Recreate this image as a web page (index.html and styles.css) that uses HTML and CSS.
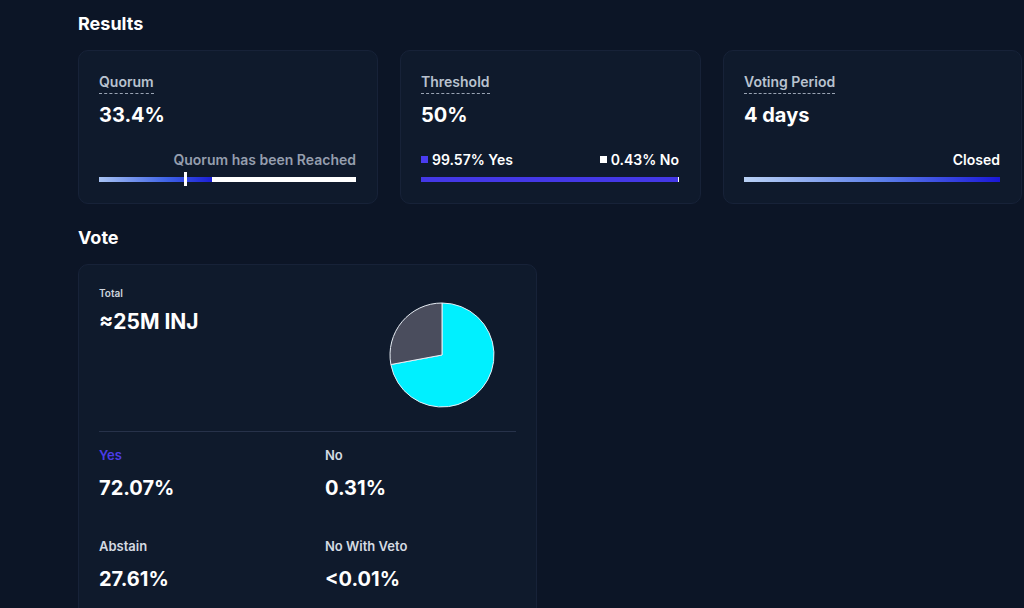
FILE: index.html
```html
<!DOCTYPE html>
<html lang="en">
<head>
	<meta charset="UTF-8">
	<title>Proposal</title>
	<link rel="stylesheet" href="styles.css">
</head>
<body>
	<div class="page">
		<h2 class="title">Results</h2>
		<div class="results">
			<div class="card stat">
				<span class="label">Quorum</span>
				<div class="value">33.4%</div>
				<div class="foot">
					<div class="caption right muted">Quorum has been Reached</div>
					<div class="bar quorum">
						<span class="fill" style="width: 44%"></span>
						<span class="mark" style="left: 33.4%"></span>
					</div>
				</div>
			</div>
			<div class="card stat">
				<span class="label">Threshold</span>
				<div class="value">50%</div>
				<div class="foot">
					<div class="caption split">
						<span><i class="dot yes"></i>99.57% Yes</span>
						<span><i class="dot no"></i>0.43% No</span>
					</div>
					<div class="bar threshold">
						<span class="fill" style="width: 99.57%"></span>
					</div>
				</div>
			</div>
			<div class="card stat">
				<span class="label">Voting Period</span>
				<div class="value">4 days</div>
				<div class="foot">
					<div class="caption right">Closed</div>
					<div class="bar period"></div>
				</div>
			</div>
		</div>

		<h2 class="title vote-title">Vote</h2>
		<div class="card vote">
			<div class="vote-top">
				<div>
					<div class="small">Total</div>
					<div class="value total">≈25M INJ</div>
				</div>
				<svg class="pie" width="108" height="108" viewBox="-1 -1 108 108">
					<!-- yes 72.07%, abstain 27.61%, rest too thin to show -->
					<path d="M53 53 L53 1 A52 52 0 1 1 1.88 62.52 Z" fill="#00f0ff" stroke="#e8eef5" stroke-width="1"/>
					<path d="M53 53 L1.88 62.52 A52 52 0 0 1 53 1 Z" fill="#4a4d5d" stroke="#e8eef5" stroke-width="1"/>
				</svg>
			</div>
			<div class="options">
				<div class="option">
					<div class="opt-label yes-text">Yes</div>
					<div class="value">72.07%</div>
				</div>
				<div class="option">
					<div class="opt-label">No</div>
					<div class="value">0.31%</div>
				</div>
				<div class="option">
					<div class="opt-label">Abstain</div>
					<div class="value">27.61%</div>
				</div>
				<div class="option">
					<div class="opt-label">No With Veto</div>
					<div class="value">&lt;0.01%</div>
				</div>
			</div>
		</div>
	</div>
</body>
</html>
```

FILE: styles.css
```css
*{
	margin: 0;
	padding: 0;
	box-sizing: border-box;
}
body{
	background-color: #0c1526;
	color: #fff;
	font-family: Inter, "Liberation Sans", sans-serif;
	overflow: hidden;
}
.page{
	padding: 12px 0 0 78px;
}
.title{
	font-size: 18px;
	line-height: 24px;
	font-weight: 700;
	margin-bottom: 14px;
}
.vote-title{
	margin-top: 22px;
	margin-bottom: 14px;
}
.results{
	display: grid;
	grid-template-columns: 300px 301px 299px;
	gap: 22px;
}
.card{
	background-color: #0f1a2c;
	border: 1px solid #172238;
	border-radius: 10px;
}
.stat{
	height: 154px;
	padding: 21px 21px 21px 20px;
	display: flex;
	flex-direction: column;
	align-items: flex-start;
}
.label{
	font-size: 14px;
	line-height: 20px;
	font-weight: 600;
	color: #b9c2cf;
	padding-bottom: 1px;
	border-bottom: 1px dashed #9aa4b4;
}
.value{
	font-size: 20px;
	line-height: 26px;
	font-weight: 700;
	color: #fff;
	margin-top: 8px;
}
.foot{
	margin-top: auto;
	width: 100%;
}
.caption{
	font-size: 14px;
	line-height: 20px;
	font-weight: 600;
	margin-bottom: 7px;
}
.right{
	text-align: right;
}
.muted{
	color: #959eae;
}
.split{
	display: flex;
	justify-content: space-between;
}
.dot{
	display: inline-block;
	width: 7px;
	height: 7px;
	margin-right: 4px;
	vertical-align: 2px;
}
.dot.yes{
	background-color: #4a3cf0;
}
.dot.no{
	background-color: #fff;
}
.bar{
	position: relative;
	height: 5px;
	background-color: #fff;
}
.bar .fill{
	display: block;
	height: 100%;
}
.quorum .fill{
	background: linear-gradient(90deg, #a8c3f3, #3f63e6 60%, #1c1fd6);
}
.quorum .mark{
	position: absolute;
	top: -5px;
	width: 3px;
	height: 14px;
	margin-left: -1px;
	background-color: #fff;
}
.threshold .fill{
	background-color: #4438e6;
}
.period{
	background: linear-gradient(90deg, #b9d1f5, #5b7ee9 55%, #1a17d8);
}
.vote{
	width: 459px;
	height: 360px;
	padding: 21px 20px 0 20px;
}
.vote-top{
	display: flex;
	justify-content: space-between;
	align-items: flex-start;
	padding-bottom: 22px;
	border-bottom: 1px solid #27324a;
}
.small{
	font-size: 10px;
	line-height: 14px;
	font-weight: 600;
	color: #cdd3dc;
}
.total{
	font-size: 21px;
	margin-top: 9px;
}
.pie{
	display: block;
	margin: 15px 20px 0 0;
}
.options{
	display: grid;
	grid-template-columns: 226px 1fr;
	row-gap: 36px;
	padding-top: 14px;
}
.opt-label{
	font-size: 13px;
	line-height: 18px;
	font-weight: 600;
	color: #d5dae2;
}
.yes-text{
	color: #4b3ce8;
}
.option .value{
	margin-top: 11px;
}
```
